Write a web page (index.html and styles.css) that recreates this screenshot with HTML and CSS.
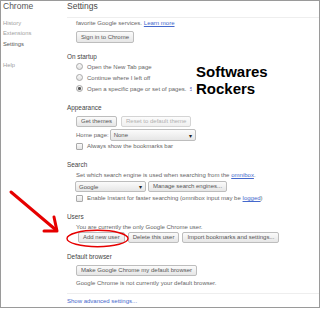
FILE: index.html
```html
<!DOCTYPE html>
<html lang="en">
<head>
    <meta charset="UTF-8">
    <meta name="viewport" content="width=device-width, initial-scale=1.0">
    <title>Chrome Settings</title>
    <link rel="stylesheet" href="styles.css">
</head>
<body>
    <div class="window">
        <nav class="sidebar">
            <div class="brand">Chrome</div>
            <ul class="nav-list">
                <li>History</li>
                <li>Extensions</li>
                <li class="current">Settings</li>
                <li class="help">Help</li>
            </ul>
        </nav>

        <main class="settings">
            <h1 class="page-title">Settings</h1>

            <section class="group">
                <p class="row first-row">favorite Google services. <a href="#" class="link">Learn more</a></p>
                <div class="btn-row btn-row-signin">
                    <button class="btn">Sign in to Chrome</button>
                </div>
            </section>

            <section class="group">
                <h3 class="group-title">On startup</h3>
                <label class="row radio-row"><span class="radio"></span>Open the New Tab page</label>
                <label class="row radio-row"><span class="radio"></span>Continue where I left off</label>
                <label class="row radio-row"><span class="radio checked"></span>Open a specific page or set of pages.<a href="#" class="link plain pages-link">Set pages</a></label>
            </section>

            <section class="group">
                <h3 class="group-title">Appearance</h3>
                <div class="btn-row">
                    <button class="btn">Get themes</button>
                    <button class="btn disabled">Reset to default theme</button>
                </div>
                <div class="select-row">
                    <span>Home page:</span>
                    <span class="select select-home">None<span class="caret">&#9662;</span></span>
                </div>
                <label class="row check-row"><span class="checkbox"></span>Always show the bookmarks bar</label>
            </section>

            <section class="group">
                <h3 class="group-title">Search</h3>
                <p class="row">Set which search engine is used when searching from the <a href="#" class="link">omnibox</a>.</p>
                <div class="btn-row btn-row-search">
                    <span class="select select-engine">Google<span class="caret">&#9662;</span></span>
                    <button class="btn">Manage search engines...</button>
                </div>
                <label class="row check-row check-instant"><span class="checkbox"></span>Enable Instant for faster searching (omnibox input may be <a href="#" class="link">logged</a>)</label>
            </section>

            <section class="group">
                <h3 class="group-title">Users</h3>
                <p class="row">You are currently the only Google Chrome user.</p>
                <div class="btn-row btn-row-users">
                    <button class="btn">Add new user</button>
                    <button class="btn">Delete this user</button>
                    <button class="btn">Import bookmarks and settings...</button>
                </div>
            </section>

            <section class="group">
                <h3 class="group-title">Default browser</h3>
                <div class="btn-row">
                    <button class="btn">Make Google Chrome my default browser</button>
                </div>
                <p class="row browser-note">Google Chrome is not currently your default browser.</p>
            </section>

            <div class="footer">
                <a href="#" class="link plain">Show advanced settings...</a>
            </div>
        </main>

        <!-- annotations drawn on top of the screenshot -->
        <svg class="markup" width="320" height="309" viewBox="0 0 320 309">
            <path d="M11 192 L56 230" />
            <path d="M44 231 L57 231 L54 217" />
            <ellipse cx="97.5" cy="238.5" rx="30.5" ry="8.2" />
        </svg>
        <div class="watermark">Softwares<br>Rockers</div>
    </div>
</body>
</html>
```

FILE: styles.css
```css
:root {
    --text-color: #666;
    --muted-color: #a0a0a0;
    --title-color: #444;
    --link-color: #4468cc;
    --border-color: #bdbdbd;
    --frame-color: #9a9a9a;
}

body {
    margin: 0;
    background: #fff;
    font-family: "Liberation Sans", Arial, sans-serif;
    font-size: 6px;
    color: var(--text-color);
}

.window {
    position: relative;
    display: flex;
    width: 318px;
    height: 306px;
    border: 1px solid var(--frame-color);
    overflow: hidden;
}

.sidebar {
    width: 64px;
    padding-left: 2px;
    flex-shrink: 0;
}

.brand {
    height: 11px;
    line-height: 11px;
    font-size: 8.5px;
    color: #555;
}

.nav-list {
    list-style: none;
    margin: 5.75px 0 0;
    padding: 0;
}

.nav-list li {
    height: 10.5px;
    line-height: 10.5px;
    font-size: 5.8px;
    color: var(--muted-color);
}

.nav-list .current {
    color: #555;
}

.nav-list .help {
    margin-top: 11px;
}

.settings {
    flex: 1;
    min-width: 0;
}

.page-title {
    margin: 0;
    height: 11px;
    padding-bottom: 5px;
    line-height: 11px;
    font-size: 8.5px;
    font-weight: normal;
    color: #4a4a4a;
    border-bottom: 1px solid #eee;
}

.group {
    padding-left: 9px;
}

.group-title {
    margin: 9px 0 0 -9px;
    height: 10px;
    line-height: 10px;
    font-size: 6.4px;
    font-weight: normal;
    color: var(--title-color);
}

.row {
    display: flex;
    align-items: center;
    margin: 0;
    height: 10px;
    white-space: nowrap;
}

.first-row {
    margin-top: 0;
}

.link {
    color: var(--link-color);
    margin-left: 0.3em;
}

.link.plain {
    text-decoration: none;
}

.pages-link {
    margin-left: 3px;
}

.radio-row {
    height: 11px;
}

.group-title + .radio-row {
    margin-top: -1px;
}

.radio {
    flex-shrink: 0;
    width: 5px;
    height: 5px;
    margin-right: 4px;
    border: 1px solid #a8a8a8;
    border-radius: 50%;
    background: linear-gradient(#fafafa, #e2e2e2);
    position: relative;
}

.radio.checked::after {
    content: "";
    position: absolute;
    left: 1.25px;
    top: 1.25px;
    width: 2.5px;
    height: 2.5px;
    border-radius: 50%;
    background: #555;
}

.checkbox {
    width: 5px;
    height: 5px;
    margin-right: 4px;
    border: 1px solid #aaa;
    border-radius: 1px;
    background: linear-gradient(#fafafa, #e4e4e4);
}

.btn-row {
    display: flex;
    gap: 4px;
    margin-top: 3px;
}

.btn-row-search {
    margin-top: 1px;
    gap: 2px;
}

.btn-row-users {
    margin-top: 0;
    margin-left: 2px;
    gap: 3px;
}

.btn {
    height: 11px;
    padding: 0 4px;
    font-family: inherit;
    font-size: 6px;
    line-height: 9px;
    color: #555;
    background: linear-gradient(#fbfbfb, #e6e6e6);
    border: 1px solid var(--border-color);
    border-radius: 2px;
}

.btn-row-signin .btn {
    height: 12px;
}

.btn.disabled {
    color: #b0b0b0;
    border-color: #d4d4d4;
    background: linear-gradient(#fcfcfc, #f0f0f0);
}

.select-row {
    display: flex;
    align-items: center;
    gap: 1px;
    margin-top: 2px;
    height: 12px;
}

.select {
    position: relative;
    display: flex;
    align-items: center;
    height: 10px;
    padding-left: 3px;
    border: 1px solid var(--border-color);
    border-radius: 2px;
    background: linear-gradient(#fbfbfb, #e6e6e6);
    color: #555;
}

.select-home {
    width: 81px;
}

.select-engine {
    width: 66px;
    height: 9px;
    margin-left: -1px;
}

.caret {
    position: absolute;
    right: 3px;
    font-size: 6px;
    color: #222;
}

.check-instant {
    margin-top: 1px;
}

.browser-note {
    margin-top: 2px;
}

.footer {
    margin-top: 5px;
    padding-top: 3px;
    height: 9px;
    line-height: 9px;
    border-top: 1px solid #eee;
}

.footer .link {
    margin-left: 0;
}

.markup {
    position: absolute;
    left: -1px;
    top: -1px;
    fill: none;
    stroke: #e60000;
    pointer-events: none;
}

.markup path {
    stroke-width: 3;
    stroke-linecap: round;
    stroke-linejoin: round;
}

.markup ellipse {
    stroke-width: 1.4;
}

.watermark {
    position: absolute;
    left: 191px;
    top: 62px;
    padding: 0 6px 0 4px;
    background: #fff;
    font-size: 15px;
    font-weight: bold;
    line-height: 17px;
    color: #000;
}
```
